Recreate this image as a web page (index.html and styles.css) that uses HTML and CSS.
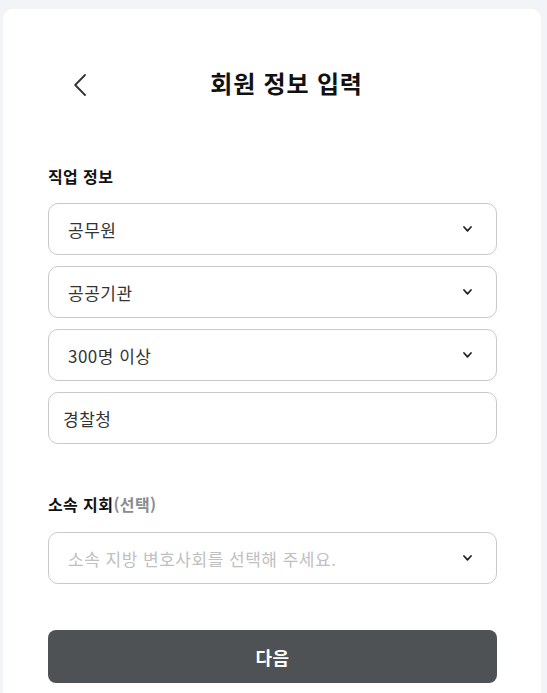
FILE: index.html
```html
<!DOCTYPE html>
<html lang="ko">
<head>
<meta charset="utf-8">
<title>회원 정보 입력</title>
<link rel="stylesheet" href="styles.css">
</head>
<body>
<div class="card">
  <header class="header">
    <button class="back" aria-label="뒤로">
      <svg width="12" height="22" viewBox="0 0 12 22"><path d="M11 1 L1.2 11 L11 21" fill="none" stroke="#333" stroke-width="1.8" stroke-linecap="round" stroke-linejoin="round"/></svg>
    </button>
    <h1 class="title">회원 정보 입력</h1>
  </header>

  <section class="section">
    <h2 class="label">직업 정보</h2>
    <div class="fields">
      <div class="select"><span class="value">공무원</span><svg class="chev" width="9" height="6" viewBox="0 0 9 6"><path d="M1 1 L4.5 4.8 L8 1" fill="none" stroke="#222" stroke-width="1.7" stroke-linecap="round" stroke-linejoin="round"/></svg></div>
      <div class="select"><span class="value">공공기관</span><svg class="chev" width="9" height="6" viewBox="0 0 9 6"><path d="M1 1 L4.5 4.8 L8 1" fill="none" stroke="#222" stroke-width="1.7" stroke-linecap="round" stroke-linejoin="round"/></svg></div>
      <div class="select"><span class="value">300명 이상</span><svg class="chev" width="9" height="6" viewBox="0 0 9 6"><path d="M1 1 L4.5 4.8 L8 1" fill="none" stroke="#222" stroke-width="1.7" stroke-linecap="round" stroke-linejoin="round"/></svg></div>
      <div class="input"><span class="value">경찰청</span></div>
    </div>
  </section>

  <section class="section section-2">
    <h2 class="label">소속 지회<span class="optional">(선택)</span></h2>
    <div class="fields">
      <div class="select"><span class="placeholder">소속 지방 변호사회를 선택해 주세요.</span><svg class="chev" width="9" height="6" viewBox="0 0 9 6"><path d="M1 1 L4.5 4.8 L8 1" fill="none" stroke="#222" stroke-width="1.7" stroke-linecap="round" stroke-linejoin="round"/></svg></div>
    </div>
  </section>

  <button class="next">다음</button>
</div>
</body>
</html>
```

FILE: styles.css
```css
* { box-sizing: border-box; }
html, body { height: 100%; }
body {
  margin: 0;
  padding: 9px 6px 0 3px;
  background: #f3f4f8;
  font-family: "Noto Sans CJK KR", "Noto Sans", sans-serif;
  color: #222;
  overflow: hidden;
}
.card {
  background: #fff;
  border-radius: 10px 10px 0 0;
  padding: 48px 44px 40px 45px;
  min-height: 720px;
}
.header {
  position: relative;
  height: 56px;
  display: flex;
  align-items: center;
  justify-content: center;
}
.back {
  position: absolute;
  left: 26px;
  top: 17px;
  width: 12px;
  height: 22px;
  padding: 0;
  border: 0;
  background: none;
  display: flex;
}
.title {
  margin: 0 0 4px 28px;
  font-size: 24px;
  font-weight: 700;
  letter-spacing: 0.8px;
  color: #111;
  line-height: 30px;
}
.section { margin-top: 52px; }
.section-2 { margin-top: 49px; }
.label {
  margin: 0 0 16px;
  font-size: 16px;
  letter-spacing: 0.4px;
  line-height: 22px;
  font-weight: 700;
  color: #111;
}
.section-2 .label { margin-bottom: 17px; }
.optional { color: #8a8c8f; }
.fields {
  display: flex;
  flex-direction: column;
  gap: 11px;
}
.select, .input {
  height: 52px;
  border: 1px solid #c9c9cc;
  border-radius: 10px;
  display: flex;
  align-items: center;
  font-size: 17px;
  letter-spacing: 0.5px;
  color: #333;
}
.select { padding: 0 24px 0 19px; justify-content: space-between; }
.input { padding: 0 14px; }
.placeholder { color: #bfc0c2; }
.chev { flex: none; }
.next {
  display: block;
  width: 100%;
  margin-top: 46px;
  height: 53px;
  border: 0;
  border-radius: 8px;
  background: #4f5254;
  color: #fff;
  font-family: inherit;
  font-size: 18px;
  font-weight: 700;
  letter-spacing: 0.4px;
}
```
